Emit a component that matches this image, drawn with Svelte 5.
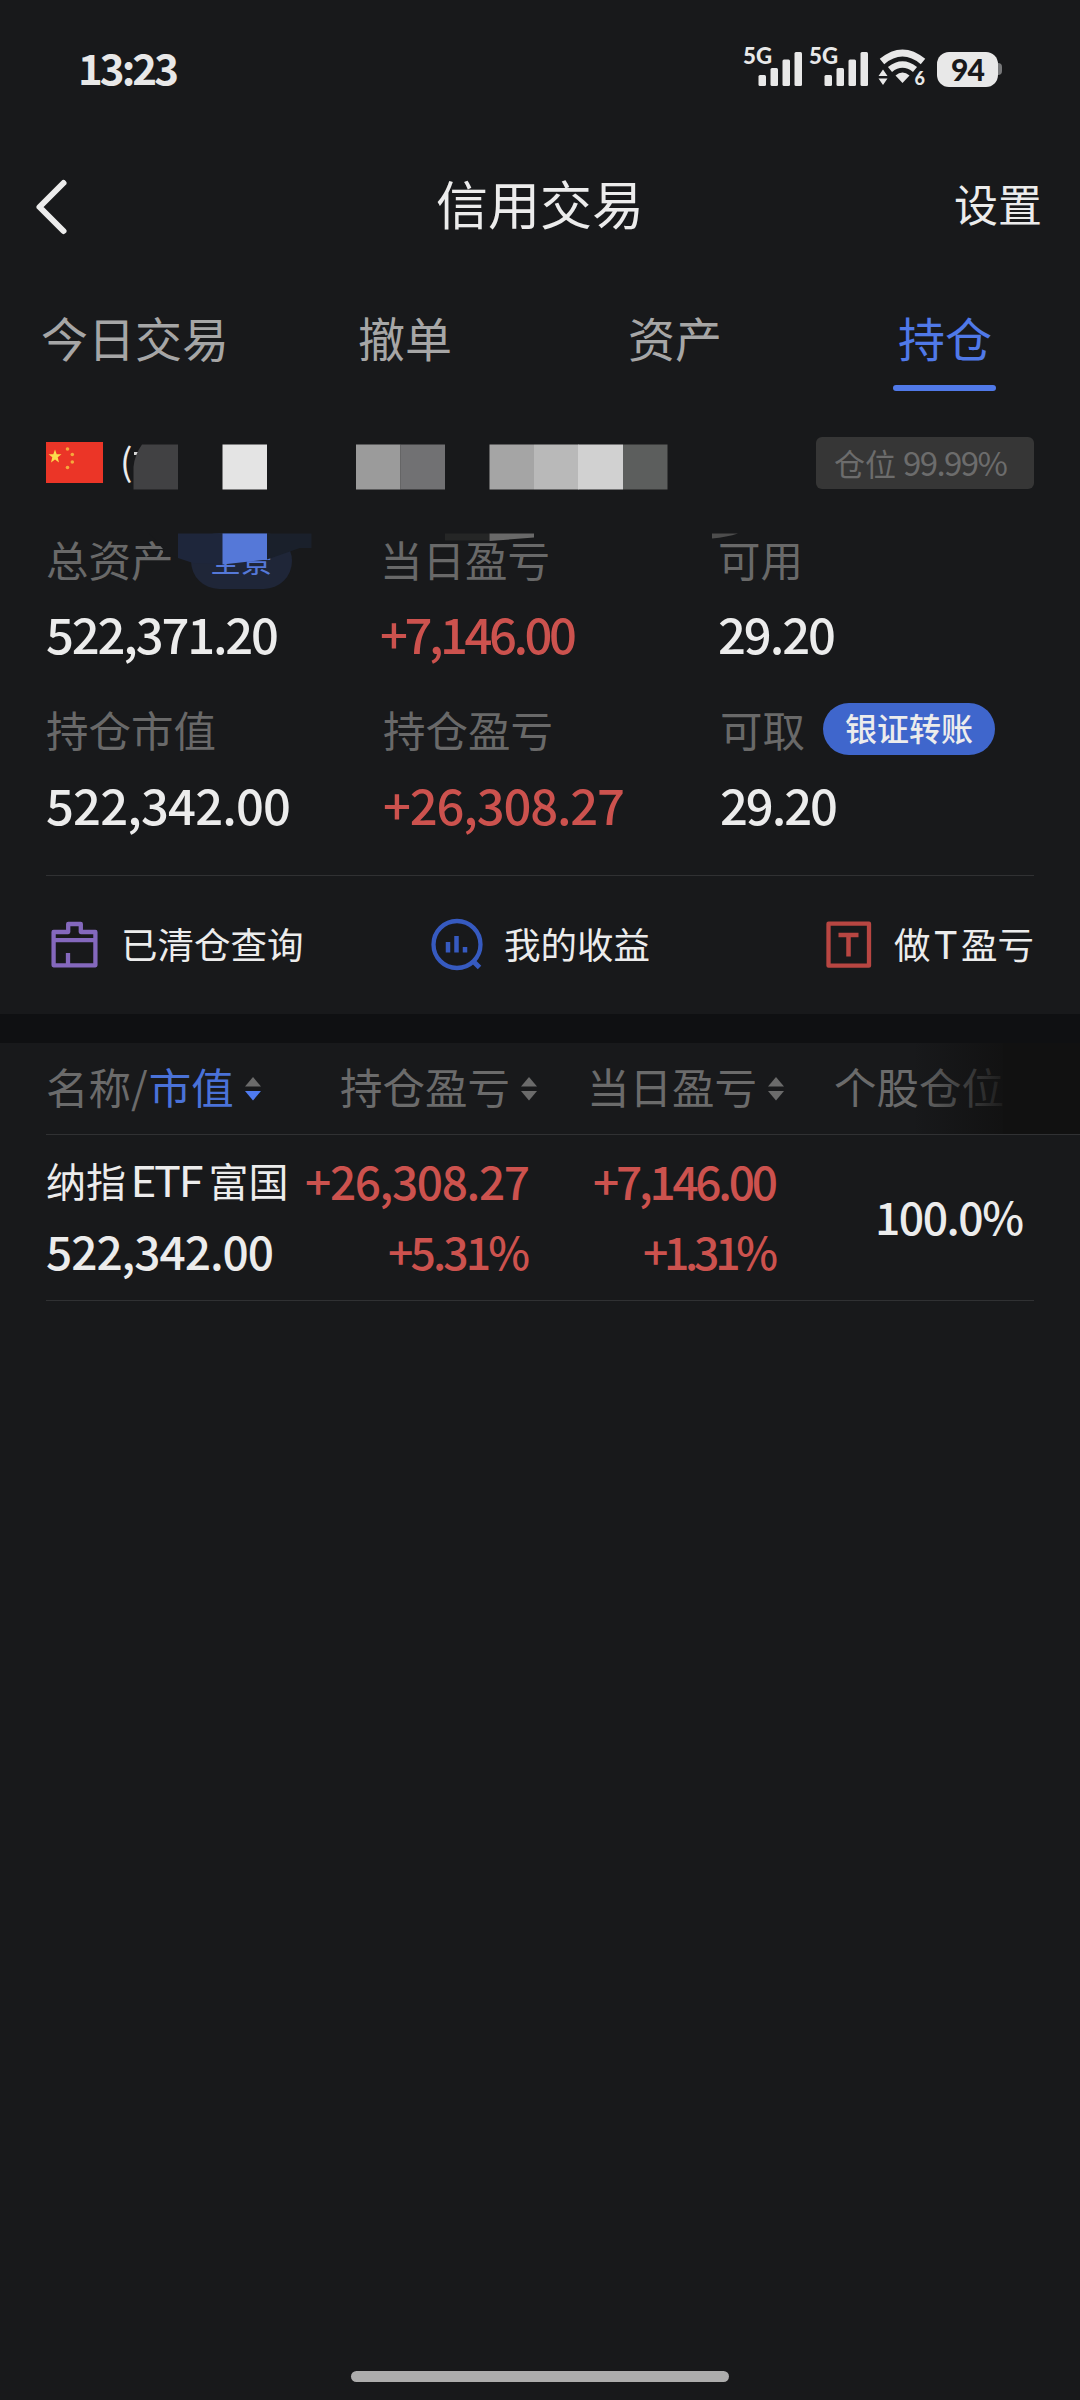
<!--
  Margin account positions screen: status bar, tabs, account summary,
  shortcuts and the holdings table.
-->
<script lang="ts">
  type Figure = { label: string; value: string; width: number; up?: boolean; badge?: 'overview' | 'transfer' };

  const tabs = ['今日交易', '撤单', '资产', '持仓'];
  const activeTab = '持仓';

  const topFigures: Figure[] = [
    { label: '总资产', value: '522,371.20', width: 233, badge: 'overview' },
    { label: '当日盈亏', value: '+7,146.00', width: 197, up: true },
    { label: '可用', value: '29.20', width: 118 }
  ];
  const bottomFigures: Figure[] = [
    { label: '持仓市值', value: '522,342.00', width: 245 },
    { label: '持仓盈亏', value: '+26,308.27', width: 242, up: true },
    { label: '可取', value: '29.20', width: 118, badge: 'transfer' }
  ];

  // Spreads the glyphs so that the text takes exactly the given width.
  function fit(node: HTMLElement, width: number) {
    const count = (node.textContent ?? '').length;
    const natural = node.getBoundingClientRect().width;
    const spacing = (width - natural) / (count - 1);
    node.style.letterSpacing = `${spacing}px`;
    node.style.marginRight = `${-spacing}px`;
  }
</script>

{#snippet signal()}
  <svg class="signal" width="60" height="42" viewBox="0 0 60 42">
    <text x="-1" y="19" font-size="22.500" font-weight="900" textLength="29" lengthAdjust="spacingAndGlyphs">5G</text>
    <rect x="14.500" y="30" width="7.500" height="11" rx="1.5" />
    <rect x="26.500" y="23" width="7.500" height="18" rx="1.5" />
    <rect x="38.500" y="14.500" width="7.500" height="26.500" rx="1.5" />
    <rect x="50.500" y="7" width="7.500" height="34" rx="1.5" />
  </svg>
{/snippet}

{#snippet sorter(active: boolean)}
  <svg class="sorter" class:active width="18" height="26" viewBox="0 0 18 26">
    <path d="M9 1 17 10.500H1Z" />
    <path class="down" d="M1 15H17L9 24.500Z" />
  </svg>
{/snippet}

{#snippet figures(items: Figure[])}
  {#each items as item}
    <div class="figure">
      <div class="label">
        <span>{item.label}</span>
        {#if item.badge === 'overview'}
          <span class="overview">全景</span>
        {:else if item.badge === 'transfer'}
          <span class="transfer">银证转账</span>
        {/if}
      </div>
      <div class="value" class:up={item.up}><span class="num" use:fit={item.width}>{item.value}</span></div>
    </div>
  {/each}
{/snippet}

<main>
  <div class="status">
    <span class="clock num" use:fit={101}>13:23</span>
    <div class="status-icons">
      {@render signal()}
      {@render signal()}
      <svg class="wifi" width="48" height="40" viewBox="0 0 48 40">
        <path d="M3 12.500Q23.500-4.500 44 12.500" fill="none" stroke="#e8e8e8" stroke-width="7" />
        <path d="M11 20.500Q23.500 10.500 36 20.500" fill="none" stroke="#e8e8e8" stroke-width="6.500" />
        <path d="M16.500 26.500Q23.500 20.500 30.500 26.500L23.500 34Z" />
        <path d="M4 20.500 8.500 27H-.5ZM-.5 29.500H8.500L4 36Z" />
        <text x="35.500" y="36" font-size="18" font-weight="900">6</text>
      </svg>
      <div class="battery"><span>94</span></div>
    </div>
  </div>

  <nav>
    <svg width="36" height="60" viewBox="0 0 36 60">
      <path d="M29.500 6 5.500 30 29.500 54" fill="none" stroke="#ececec" stroke-width="6" stroke-linecap="round" stroke-linejoin="round" />
    </svg>
    <h1>信用交易</h1>
    <span class="settings">设置</span>
  </nav>

  <div class="tabs">
    {#each tabs as tab}
      <div class="tab" class:active={tab === activeTab}>{tab}</div>
    {/each}
  </div>

  <section class="account">
    <svg class="flag" width="57" height="41" viewBox="0 0 57 41">
      <rect width="57" height="41" fill="#eb3527" />
      <path fill="#fbdc4c" d="M9 7.500 10.700 12.200 15.500 12.300 11.700 15.300 13 20.500 9 17.500 5 20.500 6.300 15.300 2.500 12.300 7.300 12.200Z" />
      <g fill="#f5a83c">
        <circle cx="21.500" cy="7" r="1.800" />
        <circle cx="26.300" cy="12.500" r="1.800" />
        <circle cx="26.300" cy="20" r="1.800" />
        <circle cx="21.500" cy="25.500" r="1.800" />
      </g>
    </svg>
    <span class="paren">(</span>
    <span class="ratio">仓位 <span class="num" use:fit={105}>99.99%</span></span>

    <!-- mosaic that hides the account name and number -->
    <svg class="mosaic" width="700" height="140" viewBox="46 440 700 140" aria-hidden="true">
      <rect x="134" y="452" width="5" height="3" fill="#d8d8d8" />
      <path fill="#414143" d="M142 444.500H178V489.500H133.500V467Q134.500 455 142 444.500Z" />
      <rect x="222.500" y="444.500" width="44.500" height="45" fill="#e4e4e4" />
      <rect x="356" y="444.500" width="44.500" height="45" fill="#9b9b9b" />
      <rect x="400.500" y="444.500" width="44.500" height="45" fill="#717173" />
      <rect x="489.500" y="444.500" width="44.500" height="45" fill="#a5a5a5" />
      <rect x="534" y="444.500" width="44.500" height="45" fill="#b9b9b9" />
      <rect x="578" y="444.500" width="45" height="45" fill="#d1d1d1" />
      <rect x="623" y="444.500" width="44.500" height="45" fill="#5c5e5d" />
      <path fill="#18191b" d="M149 533H178V558L163 552V549Z" />
      <path fill="#1e263b" d="M178 533.500H223V564L193 563 178 558Z" />
      <path fill="#5578d8" d="M222.500 533.500H267V559.500L222.500 564.500Z" />
      <path fill="#1a202b" d="M267 533.500H311.500V548H300L267 559.500Z" />
      <rect x="445" y="533.500" width="44.500" height="7" fill="#252626" />
      <path fill="#696969" d="M489.500 533.500H534V537.500L489.500 541Z" />
      <path fill="#4d4d4d" d="M712 533.500H738Q727 537 712 538.500Z" />
    </svg>
  </section>

  <section class="summary top">{@render figures(topFigures)}</section>
  <section class="summary bottom">{@render figures(bottomFigures)}</section>

  <section class="tools">
    <div class="tool">
      <svg width="54" height="56" viewBox="0 0 54 56" fill="none" stroke="#8468bd" stroke-width="4.300" stroke-linejoin="round">
        <path d="M21.200 15V7H33.800V15H48.400V48.300H6.600V15ZM6.600 23.200H48.400M21 48V36" />
      </svg>
      <span>已清仓查询</span>
    </div>
    <div class="tool">
      <svg width="54" height="56" viewBox="0 0 54 56" fill="none" stroke="#365ac0" stroke-width="4.300">
        <circle cx="27" cy="27.500" r="23.500" />
        <path d="M43 44 49.500 50.500" stroke-width="5" />
        <path d="M18 35.500V25M26.500 35.500V19M35 35.500V30" stroke-width="4.500" />
      </svg>
      <span>我的收益</span>
    </div>
    <div class="tool">
      <svg width="48" height="56" viewBox="0 0 48 56" fill="none" stroke="#b84642" stroke-width="4.300" stroke-linejoin="round">
        <rect x="2.500" y="6.700" width="40.500" height="42" />
        <path d="M12.500 18H32.500M22.500 18V39.500" stroke-width="4.500" />
      </svg>
      <span>做<i>T</i>盈亏</span>
    </div>
  </section>

  <section class="holdings">
    <div class="head">
      <span class="h-name">名称/<b>市值</b>{@render sorter(true)}</span>
      <span class="h-total">持仓盈亏{@render sorter(false)}</span>
      <span class="h-day">当日盈亏{@render sorter(false)}</span>
      <span class="h-share">个股仓位</span>
      <div class="fade"></div>
    </div>
    <div class="row">
      <div class="cell name">
        <span class="stock">纳指<i>ETF</i>富国</span>
        <span><span class="num" use:fit={228}>522,342.00</span></span>
      </div>
      <div class="cell total up">
        <span><span class="num" use:fit={225}>+26,308.27</span></span>
        <span><span class="num percent" use:fit={142}>+5.31%</span></span>
      </div>
      <div class="cell day up">
        <span><span class="num" use:fit={185}>+7,146.00</span></span>
        <span><span class="num percent" use:fit={135}>+1.31%</span></span>
      </div>
      <div class="cell share"><span><span class="num percent" use:fit={149}>100.0%</span></span></div>
    </div>
  </section>

  <div class="home-bar"></div>
</main>

<style>
  :global(body) {
    background: #18191b;
  }
  main {
    position: relative;
    display: flex;
    flex-direction: column;
    width: 1080px;
    height: 2400px;
    overflow: hidden;
    background: #18191b;
    color: #ececec;
    font-family: 'Noto Sans CJK SC', sans-serif;
    white-space: nowrap;
  }
  .num {
    display: inline-block;
    font-weight: 500;
  }
  .percent { font-size: 44.500px; }
  .up { color: #cc524e; }
  i { font-style: normal; }

  .status {
    display: flex;
    align-items: center;
    justify-content: space-between;
    height: 138px;
    padding: 0 78px 0 78px;
    color: #e8e8e8;
  }
  .clock {
    padding-bottom: 5px;
    font-size: 42px;
    font-weight: 700;
  }
  .status-icons {
    display: flex;
    align-items: center;
    font-family: Lato, sans-serif;
    fill: #e8e8e8;
  }
  .signal {
    margin: 0 6px 7px 0;
    overflow: visible;
  }
  .wifi {
    margin: 0 10px 0 3px;
    overflow: visible;
  }
  .battery {
    position: relative;
    width: 61px;
    height: 35px;
    margin-right: 4px;
    border-radius: 12px;
    background: #e8e8e8;
    color: #18191b;
    font: 900 30px/34px Lato, sans-serif;
    letter-spacing: -1px;
    text-align: center;
  }
  .battery::after {
    content: '';
    position: absolute;
    left: 61px;
    top: 11px;
    width: 4px;
    height: 12px;
    border-radius: 0 4px 4px 0;
    background: #77787a;
  }

  nav {
    display: grid;
    grid-template-columns: 1fr auto 1fr;
    align-items: center;
    height: 137px;
    padding: 0 38px 0 34px;
  }
  h1 {
    margin: 0 -2px 0 2px;
    padding-bottom: 8px;
    font-size: 52px;
    font-weight: 400;
  }
  .settings {
    justify-self: end;
    padding-bottom: 7px;
    font-size: 44px;
  }

  .tabs {
    display: flex;
    height: 125px;
    margin-top: 8px;
  }
  .tab {
    position: relative;
    flex: 1;
    color: #a6a6a6;
    font-size: 47px;
    line-height: 107px;
    text-align: center;
  }
  .tab.active { color: #5079e8; }
  .tab.active::after {
    content: '';
    position: absolute;
    left: 83px;
    top: 102px;
    width: 103px;
    height: 6px;
    border-radius: 3px;
    background: #5079e8;
  }

  .account {
    position: relative;
    display: flex;
    align-items: center;
    height: 110px;
    padding: 0 46px;
  }
  .flag { margin-bottom: 1px; }
  .paren {
    margin-left: 17px;
    padding-bottom: 7px;
    font-size: 37px;
    line-height: 50px;
  }
  .ratio {
    box-sizing: border-box;
    width: 218px;
    height: 52px;
    margin-left: auto;
    padding-left: 18px;
    border-radius: 6px;
    background: #363636;
    color: #6c6c6c;
    font-size: 31px;
    line-height: 50px;
  }
  .ratio .num {
    font-size: 33px;
    font-weight: 400;
  }
  .mosaic {
    position: absolute;
    z-index: 1;
    left: 46px;
    top: 32px;
  }

  .summary { display: grid; }
  .top {
    grid-template-columns: 334px 338px 1fr;
    height: 157px;
    padding-left: 46px;
  }
  .bottom {
    grid-template-columns: 337px 337px 1fr;
    height: 200px;
    margin: 0 46px;
    border-bottom: 1px solid #303133;
  }
  .label {
    display: flex;
    align-items: center;
    height: 84px;
    color: #696969;
    font-size: 42.500px;
  }
  .label > span:first-child { padding-bottom: 3px; }
  .bottom .label { height: 108px; }
  .bottom .label > span:first-child { padding-bottom: 1px; }
  .overview {
    width: 101px;
    height: 56px;
    margin: 2px 0 0 17px;
    border-radius: 28px;
    background: #1f2638;
    color: #5578d8;
    font-size: 31px;
    line-height: 52px;
    text-align: center;
  }
  .transfer {
    width: 172px;
    height: 52px;
    margin-left: 18px;
    border-radius: 27px;
    background: #3f66cc;
    color: #ececec;
    font-size: 32px;
    font-weight: 500;
    line-height: 48px;
    text-align: center;
  }
  .value {
    height: 61px;
    font-size: 49px;
    line-height: 61px;
  }
  .bottom .value {
    height: 41px;
    line-height: 41px;
  }

  .tools {
    display: flex;
    height: 138px;
    padding: 0 46px 0 47px;
  }
  .tool {
    display: flex;
    align-items: center;
    font-size: 36.500px;
  }
  .tool:first-child { width: 383px; }
  .tool:last-child { margin-left: auto; }
  .tool span { padding-bottom: 4px; }
  .tool svg { margin-right: 20px; }
  .tool i {
    margin: 0 4px;
    font-family: Lato, sans-serif;
    font-size: 38px;
  }

  .holdings { border-top: 29px solid #0f1012; }
  .head {
    position: relative;
    display: flex;
    align-items: center;
    height: 91px;
    margin-left: 46px;
    border-bottom: 1px solid #303133;
    color: #6b6b6b;
    font-size: 42.500px;
    line-height: 84px;
  }
  .head span {
    display: flex;
    align-items: center;
    padding-bottom: 6px;
  }
  .head b {
    margin-left: 1px;
    color: #4a72d8;
    font-weight: 400;
  }
  .h-name { width: 294px; }
  .h-total { width: 247px; }
  .h-day { width: 247px; }
  .sorter {
    margin: 6px 0 0 10px;
    fill: #6b6b6b;
  }
  .sorter.active .down { fill: #4f7bf0; }
  .fade {
    position: absolute;
    right: 0;
    top: 0;
    width: 180px;
    height: 91px;
    background: linear-gradient(90deg, #11111100 7%, #111111dd 57%, #111 57%);
  }
  .row {
    display: flex;
    align-items: center;
    height: 165px;
    margin: 0 46px;
    border-bottom: 1px solid #303133;
  }
  .cell {
    display: flex;
    flex-direction: column;
    font-size: 46px;
    line-height: 64px;
  }
  .cell > span { height: 70px; }
  .total, .day, .share { align-items: flex-end; }
  .name { width: 244px; }
  .total { width: 240px; }
  .day { width: 248px; }
  .share { width: 246px; }
  .stock {
    font-size: 40px;
    line-height: 65px;
  }
  .stock i {
    margin: 0 6px 0 5px;
    font-family: Lato, sans-serif;
    font-size: 43px;
    letter-spacing: -1px;
  }

  .home-bar {
    position: absolute;
    left: 351px;
    bottom: 18px;
    width: 378px;
    height: 11px;
    border-radius: 6px;
    background: #adadad;
  }
</style>
